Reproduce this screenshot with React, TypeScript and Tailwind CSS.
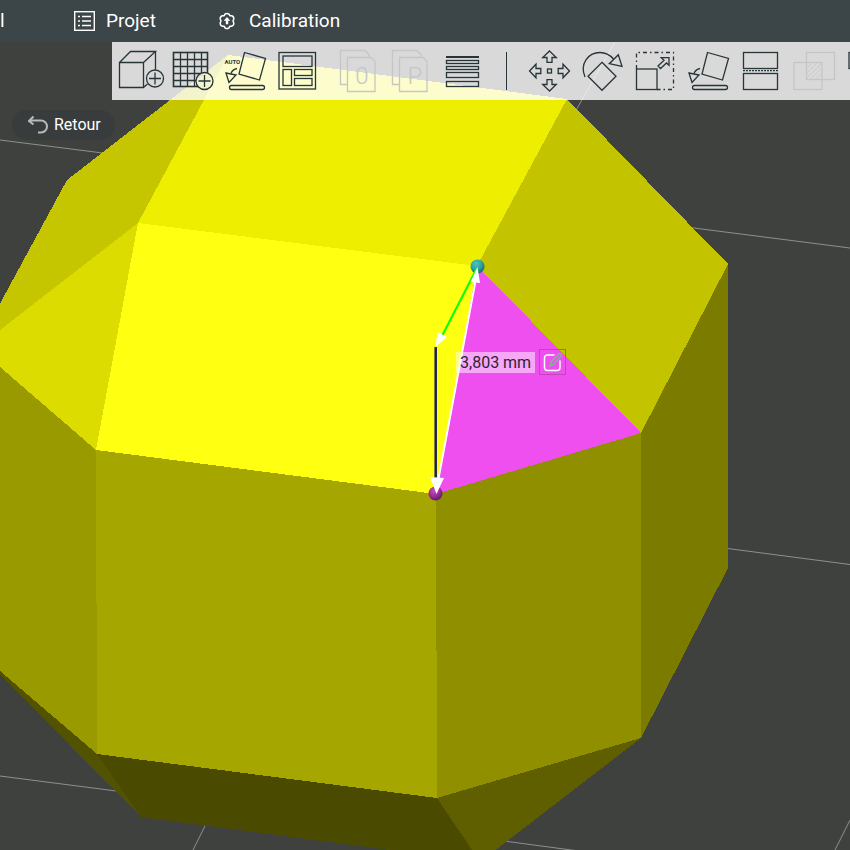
/**
 * 3D slicer window: top tabs, scene toolbar and the viewport
 * with the measure tool active.
 */

import type { ReactNode } from 'react';

interface Tool {
  name: string;
  icon: ReactNode;
  disabled?: boolean;
}

// Tipped square falling on the bed, shared by "auto orient" and "lay on face"
function FallingSquare() {
  return (
    <>
      <path d="M25.5 5.5 46.5 11.5 40.5 33 20 27Z" />
      <path d="M7 26 17 28 10 35.5Z" />
      <path d="M18 21.5C15 22 13 24 12 26.5" />
      <rect x="10.5" y="38.5" width="35" height="4" rx="2" />
    </>
  );
}

const plateTools: Tool[] = [
  {
    name: 'Ajouter',
    icon: (
      <>
        <path d="M4.5 15.5H28.5V40.5H4.5ZM4.5 15.5 15.5 4.5H40.5L28.5 15.5M40.5 4.5V22.5M28.5 40.5 32.5 37" />
        <circle cx="40" cy="31.5" r="8.5" />
        <path d="M34 31.5H46M40 25.5V37.5" />
      </>
    ),
  },
  {
    name: 'Ajouter un plateau',
    icon: (
      <>
        <mask id="plate-cut">
          <rect width="52" height="48" fill="white" stroke="none" />
          <circle cx="37.5" cy="34" r="8.5" fill="black" stroke="none" />
        </mask>
        <g mask="url(#plate-cut)">
          <rect x="6.5" y="5.5" width="34" height="34" strokeWidth="1.6" />
          <path d="M13.5 5.5V39.5M20.5 5.5V39.5M27.5 5.5V39.5M34.5 5.5V39.5M6.5 12.5H40.5M6.5 19.5H40.5M6.5 26.5H40.5M6.5 33.5H40.5" />
        </g>
        <circle cx="37.5" cy="34" r="8.5" />
        <path d="M31.5 34H43.5M37.5 28V40" />
      </>
    ),
  },
  {
    name: 'Orientation automatique',
    icon: (
      <>
        <FallingSquare />
        <text x="5.5" y="17" fontSize="6" fontWeight="700" fill="currentColor" stroke="none">AUTO</text>
      </>
    ),
  },
  {
    name: 'Organiser',
    icon: (
      <>
        <rect x="8" y="5.5" width="36.5" height="36.5" />
        <rect x="12" y="9" width="29" height="10.5" />
        <rect x="12" y="22.5" width="8.5" height="16" />
        <rect x="23.5" y="22.5" width="17.5" height="6" />
        <rect x="23.5" y="31.5" width="17.5" height="7" />
      </>
    ),
  },
];

const partTools: Tool[] = [
  {
    name: 'Scinder en objets',
    disabled: true,
    icon: (
      <>
        <path d="M15.5 37.5H8.5V3.5H33L37 7.5V10.5" />
        <path d="M15.5 10.5H39L43 14.5V44.5H15.5Z" />
        <text x="30" y="37" fontSize="24" fontWeight="300" textAnchor="middle" fill="currentColor" stroke="none">0</text>
      </>
    ),
  },
  {
    name: 'Scinder en pièces',
    disabled: true,
    icon: (
      <>
        <path d="M15.5 37.5H8.5V3.5H33L37 7.5V10.5" />
        <path d="M15.5 10.5H39L43 14.5V44.5H15.5Z" />
        <text x="31" y="37" fontSize="24" fontWeight="300" textAnchor="middle" fill="currentColor" stroke="none">P</text>
      </>
    ),
  },
  {
    name: 'Hauteur de couche variable',
    icon: (
      <>
        <rect x="10" y="9" width="33" height="2" fill="currentColor" stroke="none" />
        <rect x="10.5" y="13.5" width="32" height="3" />
        <rect x="10.5" y="19.5" width="32" height="3" />
        <rect x="10.5" y="25.5" width="32" height="5" />
        <rect x="10.5" y="34.5" width="32" height="5" />
      </>
    ),
  },
];

const arrow = 'M26.5 4 33.3 10.5H29V15.3H24V10.5H19.7Z';

const gizmoTools: Tool[] = [
  {
    name: 'Déplacer',
    icon: (
      <>
        <rect x="24.5" y="22" width="4" height="4" />
        <path d={arrow} />
        <path d={arrow} transform="rotate(90 26.5 24)" />
        <path d={arrow} transform="rotate(180 26.5 24)" />
        <path d={arrow} transform="rotate(270 26.5 24)" />
      </>
    ),
  },
  {
    name: 'Pivoter',
    icon: (
      <>
        <path d="M26 15.3 40 29.3 26 43.3 12 29.3Z" />
        <path d="M9 30C3.5 17 12 5.5 24 5.5C29 5.5 33.5 7.5 37.5 12" />
        <path d="M42.3 7.7 33.3 16.7 46 19.3Z" />
      </>
    ),
  },
  {
    name: 'Redimensionner',
    icon: (
      <>
        <path d="M7.5 22V5.5H44.5V42.5H28" strokeDasharray="4 3 1.5 3" />
        <rect x="7.5" y="22" width="20.5" height="20.5" />
        <path d="M32.3 10.7H40V18.3L37.5 16 31.5 21.5 29 19 35 13.2Z" />
      </>
    ),
  },
  { name: 'Poser sur une face', icon: <FallingSquare /> },
  {
    name: 'Couper',
    icon: (
      <>
        <rect x="8.5" y="5.5" width="34" height="16" />
        <rect x="8.5" y="26.5" width="34" height="16" />
        <path d="M8 23.7H43" strokeDasharray="2 1" />
      </>
    ),
  },
  {
    name: 'Opération booléenne',
    disabled: true,
    icon: (
      <>
        <rect x="18.5" y="5.5" width="28" height="27" />
        <rect x="6" y="15.5" width="28" height="27" />
        <path d="M19 21 24 16M19 26 29 16M19 31 33.5 16.5M22.5 32 33.5 21M27.5 32 33.5 26" strokeWidth="0.8" />
      </>
    ),
  },
  { name: 'Peindre les supports', icon: <rect x="8" y="5.5" width="34" height="16" /> },
];

function ToolGroup({ tools, wide = false }: { tools: Tool[]; wide?: boolean }) {
  return (
    <div className="flex shrink-0">
      {tools.map((tool) => (
        <button
          key={tool.name}
          type="button"
          aria-label={tool.name}
          disabled={tool.disabled}
          className="shrink-0 text-[#273438] disabled:text-[#c6c6c6]"
        >
          <svg
            width={wide ? 53 : 52}
            height="48"
            fill="none"
            stroke="currentColor"
            strokeWidth="1.3"
            className="block font-['Roboto',sans-serif]"
          >
            {tool.icon}
          </svg>
        </button>
      ))}
    </div>
  );
}

function Header() {
  return (
    <header className="h-[42px] overflow-hidden bg-[#3c4547] text-white">
      <nav className="flex h-full items-center text-[19px]">
        <a href="#appareil" className="w-[74px] shrink-0">l</a>
        <a href="#projet" className="flex w-[143px] shrink-0 items-center gap-[11px]">
          <svg width="21" height="20" fill="none" stroke="white" strokeWidth="1.4">
            <rect x="0.7" y="0.7" width="19.6" height="18.6" />
            <path d="M4 5.5H6M4 10H6M4 14.5H6M8 5.5H17M8 10H17M8 14.5H17" />
          </svg>
          Projet
        </a>
        <a href="#calibration" className="flex items-center gap-3">
          <svg width="20" height="20" fill="none" stroke="white" strokeWidth="1.5">
            <path
              d="M8 3.2Q10 1.6 12 3.2L12.8 4.7 14.6 4.7Q17 5.5 16.8 7.9L16 10 16.8 12.1Q17 14.5 14.6 15.3L12.8 15.3 12 16.8Q10 18.4 8 16.8L7.2 15.3 5.4 15.3Q3 14.5 3.2 12.1L4 10 3.2 7.9Q3 5.5 5.4 4.7L7.2 4.7Z"
              strokeLinejoin="round"
            />
            <path d="M10 6 13.3 9.7H11.2V13.2H8.8V9.7H6.7Z" fill="white" stroke="none" />
          </svg>
          Calibration
        </a>
      </nav>
    </header>
  );
}

function Scene() {
  return (
    <svg
      className="absolute inset-0 h-full w-full"
      viewBox="0 42 850 808"
      preserveAspectRatio="xMinYMin slice"
      aria-hidden="true"
    >
      <defs>
        <radialGradient id="ball-teal" cx="0.4" cy="0.3" r="0.7">
          <stop offset="0" stopColor="#4cc4c4" />
          <stop offset="0.6" stopColor="#2f9e9e" />
          <stop offset="1" stopColor="#1a6868" />
        </radialGradient>
        <radialGradient id="ball-purple" cx="0.4" cy="0.3" r="0.7">
          <stop offset="0" stopColor="#c44cc4" />
          <stop offset="0.6" stopColor="#982b98" />
          <stop offset="1" stopColor="#621a62" />
        </radialGradient>
      </defs>

      {/* bed grid */}
      <path
        d="M0 140 150 159M690 227.5 850 248M720 547.5 850 564.5M0 776 120 791.5M206 824 193 850M500 840.5 575 850.5M850 820 835 850M615 42 575 112"
        stroke="#8e8f8e"
        fill="none"
      />

      <g shapeRendering="crispEdges">
        {/* model faces, upper ring */}
        <path fill="#c6c600" d="M228 55 67 180 -10 322V338L138 223Z" />
        <path fill="#dcdc00" d="M138 223 0 330V367L96 450Z" />
        <path fill="#eeee00" d="M228 55 567 99 477 266 138 223Z" />
        <path fill="#ffff11" d="M138 223 477 266 436 494 96 450Z" />
        <path fill="#c3c300" d="M567 99 728 264 641 433 477 266Z" />
        <path fill="#ee4fee" d="M477 266 641 433 436 494Z" />

        {/* middle ring */}
        <path fill="#999900" d="M0 367 96 450 97 754 0 671Z" />
        <path fill="#a6a600" d="M96 450 436 494 437 798 97 754Z" />
        <path fill="#8f8f00" d="M436 494 641 433V738L437 798Z" />
        <path fill="#7b7b00" d="M641 433 728 264V568L641 738Z" />

        {/* lower ring */}
        <path fill="#525200" d="M0 671 97 754 141 817 0 674Z" />
        <path fill="#4a4a00" d="M97 754 437 798 480 862 141 817Z" />
        <path fill="#5f5f00" d="M437 798 641 738 480 862Z" />
      </g>

      {/* measured distance and its components */}
      <circle cx="477.5" cy="266.5" r="7" fill="url(#ball-teal)" />
      <circle cx="435.5" cy="493.5" r="7" fill="url(#ball-purple)" />
      <path d="M477 268 442 336" stroke="#00ff00" strokeWidth="2" />
      <path d="M435.7 347V480" stroke="#16164e" strokeWidth="2.4" />
      <path d="M435.5 347V480" stroke="#1010cc" strokeWidth="1.2" />
      <path d="M476 278 437.5 484" stroke="white" strokeWidth="2" />
      <path fill="white" d="M477.5 267 480 283 470.5 282ZM435.5 347 437.5 332 447 337ZM436.5 494 430 477 444 478Z" />
    </svg>
  );
}

export default function App() {
  return (
    <div className="flex min-h-screen flex-col overflow-hidden bg-[#3f413f] font-['Roboto','Open_Sans',sans-serif]">
      <Header />

      <main className="relative flex-1 overflow-hidden">
        <Scene />

        {/* toolbar */}
        <div className="relative ml-28 flex h-[58px] items-center overflow-hidden bg-white/80 pl-[3px]">
          <ToolGroup tools={plateTools} />
          <div className="ml-[9px] shrink-0">
            <ToolGroup tools={partTools} />
          </div>
          <div className="mr-4 ml-[18px] h-[38px] w-px shrink-0 bg-[#273438]" />
          <ToolGroup tools={gizmoTools} wide />
        </div>

        <button
          type="button"
          className="relative mt-2.5 ml-3 flex h-[30px] items-center gap-1.5 rounded-full bg-[#383c3c] pr-3.5 pl-4 text-base text-white"
        >
          <svg width="20" height="20" fill="none" stroke="#b8baba" strokeWidth="2">
            <path d="M5.5 1.5 1 6 5.5 9.5M1 5.5H13A5.8 5.8 0 0 1 13 17.5H10" />
          </svg>
          Retour
        </button>

        {/* measurement label, pinned to the middle of the edge */}
        <div className="absolute top-[307px] left-[456px] flex items-center gap-1">
          <span className="h-[21px] bg-white/50 px-1 text-base leading-[21px] text-[#2c2433]">3,803 mm</span>
          <button
            type="button"
            aria-label="Modifier"
            className="flex h-[26px] w-[27px] items-center justify-center border border-[#b045a8]/80"
          >
            <svg width="22" height="22" fill="none" strokeLinecap="round">
              <path d="M12 4H5.5A3 3 0 0 0 2.5 7V16.5A3 3 0 0 0 5.5 19.5H15A3 3 0 0 0 18 16.5V10" stroke="white" strokeWidth="1.5" />
              <path d="M8 15 9 11 17.5 2.5Q20 2 19.5 4.5L11.5 13.5Z" stroke="#83b39a" strokeWidth="1.5" />
            </svg>
          </button>
        </div>
      </main>
    </div>
  );
}
